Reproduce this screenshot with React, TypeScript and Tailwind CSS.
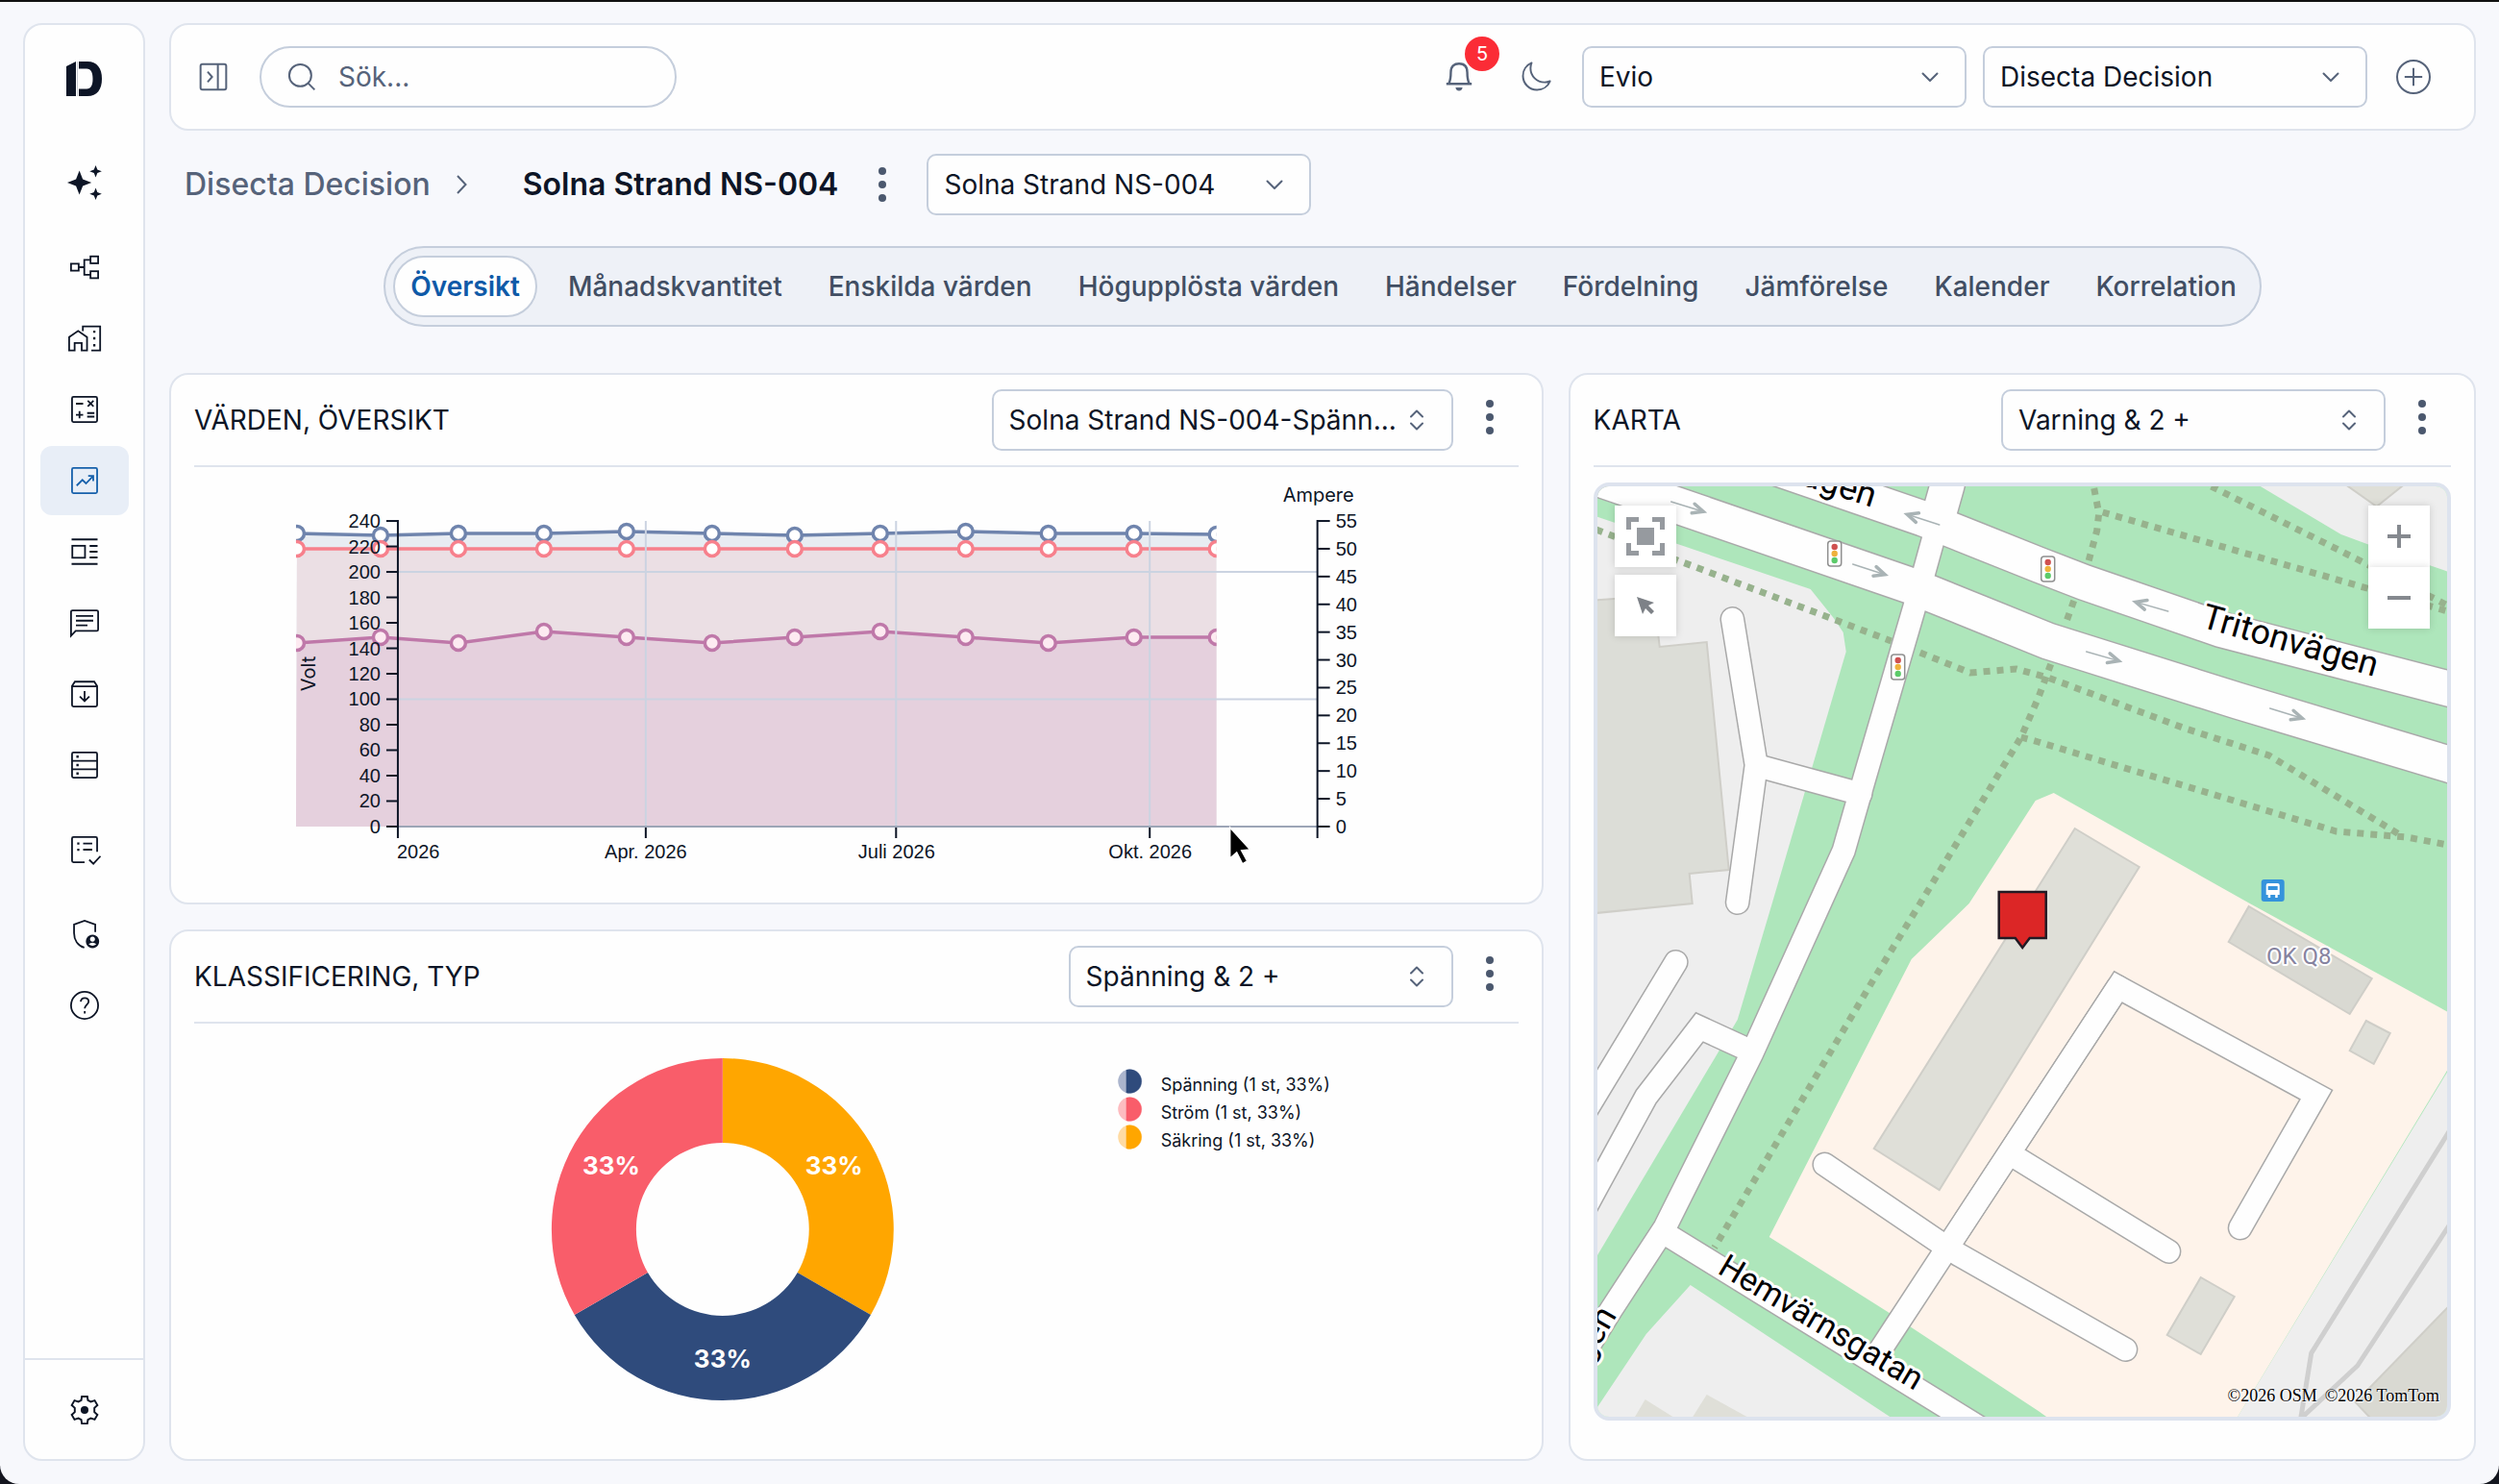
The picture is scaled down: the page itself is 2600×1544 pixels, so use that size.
import type { ReactNode } from "react";

const SANS = "font-['Inter',sans-serif]";

function Glyph({ children, className = "size-9", sw = 1.2 }: { children: ReactNode; className?: string; sw?: number }) {
  return (
    <svg viewBox="0 0 24 24" className={className} fill="none" stroke="currentColor" strokeWidth={sw} aria-hidden="true">
      {children}
    </svg>
  );
}

function NavItem({ label, active = false, children }: { label: string; active?: boolean; children: ReactNode }) {
  return (
    <button
      type="button"
      aria-label={label}
      className={
        active
          ? "flex h-[72px] w-[92px] items-center justify-center rounded-xl bg-[#e8eef7] text-[#1660ab]"
          : "flex h-[72px] w-[92px] items-center justify-center rounded-xl text-[#0d1526]"
      }
    >
      <Glyph>{children}</Glyph>
    </button>
  );
}

const star = (x: number, y: number, r: number) => {
  const k = r * 0.28;
  return `M${x} ${y - r}L${x + k} ${y - k}L${x + r} ${y}L${x + k} ${y + k}L${x} ${y + r}L${x - k} ${y + k}L${x - r} ${y}L${x - k} ${y - k}Z`;
};

function Sidebar() {
  return (
    <aside className="flex w-[127px] shrink-0 flex-col items-center rounded-[20px] border-2 border-[#dfe4ed] bg-[#fefefe]">
      <svg viewBox="0 0 37 36" className="mt-[38px] mb-[54px] h-9 w-[37px]" fill="#0d1526" role="img" aria-label="Disecta">
        <path d="M0 36V5L10 0V36Z" />
        <path d="M11.5 0V36" stroke="#b9bec8" strokeWidth="0.8" />
        <path d="M13 0H22C32 0 37 7 37 18S32 36 22 36H13V28.5H21C26 28.5 27.5 24 27.5 18S26 7.5 21 7.5H13Z" />
      </svg>
      <nav aria-label="Huvudmeny" className="flex flex-col gap-0.5">
        <div className="mb-3.5">
          <NavItem label="AI-assistent">
            <path d={star(8.4, 12, 8.4) + star(19.7, 4.2, 4.2) + star(19.7, 19.8, 4.2)} fill="currentColor" stroke="none" />
          </NavItem>
        </div>
        <NavItem label="Struktur">
          <rect x="2.6" y="9.6" width="5.3" height="4.8" />
          <rect x="16.1" y="4.5" width="5.3" height="4.8" />
          <rect x="16.1" y="14.8" width="5.3" height="4.8" />
          <path d="M8 12h3.8M16 6.9h-4.2v10.4H16" />
        </NavItem>
        <NavItem label="Fastigheter">
          <path d="M1.3 20.4V11.2L7.5 6.9L13.7 11.2V20.4H10V15.2H5.1V20.4ZM10.8 7V3.7H22.8V20.4H16.7" />
          <path d="M18 7.4h1.5M18 12h1.5M18 16.8h1.5" strokeWidth="1.6" />
        </NavItem>
        <NavItem label="Beräkningar">
          <rect x="3.3" y="3.3" width="17.4" height="17.4" rx="1" />
          <path d="M6 8h5M14.2 5.9l4 4M18.2 5.9l-4 4M6 15.8h5M8.5 13.2v5M13.8 14.5h5M13.8 17h5" />
        </NavItem>
        <NavItem label="Analys" active>
          <rect x="3.3" y="3.3" width="17.4" height="17.4" rx="1" />
          <path d="M6.5 15.5L10.5 11.5L13 14L18 8.8M14.5 8.8H18V12.3" />
        </NavItem>
        <NavItem label="Artiklar">
          <path d="M3 3.5h18M3 20.5h18M15.5 8H21M15.5 12H21M15.5 16H21" />
          <rect x="3.5" y="7.9" width="8.8" height="8.3" />
        </NavItem>
        <NavItem label="Meddelanden">
          <path d="M2.6 21V4.4Q2.6 3.4 3.6 3.4H20.4Q21.4 3.4 21.4 4.4V16.6Q21.4 17.6 20.4 17.6H5.8ZM6 7.3H18M6 10.5H18M6 13.8H14" />
        </NavItem>
        <NavItem label="Arkiv">
          <path d="M3.3 6.5L5.3 3.5H18.7L20.7 6.5V19.7Q20.7 20.7 19.7 20.7H4.3Q3.3 20.7 3.3 19.7ZM3.3 6.7H20.7M12 10V17M8.7 13.8L12 17L15.3 13.8" />
        </NavItem>
        <NavItem label="Databas">
          <rect x="3.3" y="3.3" width="17.4" height="17.4" rx="1" />
          <path d="M3.3 9.1H20.7M3.3 14.9H20.7" />
          <path d="M6.3 6.2h1.6M6.3 12h1.6M6.3 17.8h1.6" strokeWidth="1.6" />
        </NavItem>
        <div className="my-3.5">
          <NavItem label="Uppgifter">
            <path d="M12 20.7H4.3Q3.3 20.7 3.3 19.7V4.3Q3.3 3.3 4.3 3.3H19.7Q20.7 3.3 20.7 4.3V13.5M11 7.7H17.3M11 12H17.3M15.2 19L18.1 21.8L23 16.5" />
            <path d="M6.9 7.7h1.5M6.9 12h1.5" strokeWidth="1.5" />
          </NavItem>
        </div>
        <NavItem label="Behörighet">
          <path d="M11.8 21.3C7.2 19.8 4.7 15.8 4.7 11.2V5.3L12 2.6L19.4 5.3V10.5" />
          <path fillRule="evenodd" d="M17.5 12.4a4.6 4.6 0 1 0 .01 0ZM17.5 13.7a1.7 1.7 0 1 1-.01 0ZM14.8 18.9Q17.5 16.9 20.2 18.9Q17.5 21 14.8 18.9Z" fill="currentColor" stroke="none" />
        </NavItem>
        <NavItem label="Hjälp">
          <circle cx="12" cy="12" r="9.4" />
          <path d="M9.3 9.4C9.6 7.7 10.7 6.9 12.1 6.9C13.7 6.9 14.8 7.9 14.8 9.3C14.8 11.5 12.1 11.7 12.1 14.2M12.1 16V17.6" />
        </NavItem>
      </nav>
      <div className="mt-auto flex h-[105px] w-full items-center justify-center border-t-2 border-[#dfe4ed] text-[#0d1526]">
        <button type="button" aria-label="Inställningar" className="flex size-9">
          <Glyph sw={1.3}>
            <path d="M10.1 2.6H13.9L14.3 5.2L16.3 6.3L19 5.4L20.9 8.7L18.8 10.6V13.4L20.9 15.3L19 18.6L16.3 17.7L14.3 18.8L13.9 21.4H10.1L9.7 18.8L7.7 17.7L5 18.6L3.1 15.3L5.2 13.4V10.6L3.1 8.7L5 5.4L7.7 6.3L9.7 5.2Z" />
            <circle cx="12" cy="12" r="2.7" fill="currentColor" stroke="none" />
          </Glyph>
        </button>
      </div>
    </aside>
  );
}

function Select({ label, value, className, multi = false }: { label: string; value: string; className: string; multi?: boolean }) {
  return (
    <div className={`relative ${className}`}>
      <select
        aria-label={label}
        defaultValue={value}
        className="h-16 w-full appearance-none rounded-[10px] border-2 border-[#c5cedc] bg-[#fefefe] pr-12 pl-4 text-[28px] leading-8 text-[#0d1526]"
      >
        <option>{value}</option>
      </select>
      <svg
        viewBox="0 0 24 24"
        className="pointer-events-none absolute top-5 right-[26px] size-6 text-[#56637a]"
        fill="none"
        stroke="currentColor"
        strokeWidth="2"
        strokeLinecap="round"
        strokeLinejoin="round"
        aria-hidden="true"
      >
        {multi ? <path d="M6 8.5L12 2.5L18 8.5M6 15.5L12 21.5L18 15.5" /> : <path d="M4.5 8.5L12 16L19.5 8.5" />}
      </svg>
    </div>
  );
}

function Dots({ label }: { label: string }) {
  return (
    <button type="button" aria-label={label} className="flex h-14 w-10 flex-col items-center justify-center gap-1.5 text-[#4b586e]">
      <span className="size-2 rounded-full bg-current" />
      <span className="size-2 rounded-full bg-current" />
      <span className="size-2 rounded-full bg-current" />
    </button>
  );
}

function Header() {
  return (
    <header className="flex h-28 items-center rounded-[20px] border-2 border-[#dfe4ed] bg-[#fefefe] pr-[43px] pl-7 text-[#56637a]">
      <button type="button" aria-label="Visa meny" className="mr-8 flex size-8">
        <Glyph className="size-8" sw={1.5}>
          <rect x="2" y="2" width="20" height="20" rx="1.5" />
          <path d="M15.5 2V22M7.5 8L11 12L7.5 16" />
        </Glyph>
      </button>
      <div className="relative w-[434px]">
        <Glyph className="absolute top-4 left-7 size-8" sw={1.5}>
          <circle cx="10.8" cy="10.8" r="8.6" />
          <path d="M17 17L22 22" />
        </Glyph>
        <input type="search" aria-label="Sök" placeholder="Sök..." className="h-16 w-full rounded-full border-2 border-[#c5cedc] bg-[#fefefe] pr-6 pl-20 text-[28px] leading-8 placeholder:text-[#56637a]" />
      </div>
      <button type="button" aria-label="5 aviseringar" className="relative mr-11 ml-auto flex size-9">
        <Glyph className="size-9" sw={1.6}>
          <path d="M3.2 16.8H20.8M5 16.5C5.9 14.5 6.3 12.5 6.3 8.8C6.3 4.5 8.6 2.8 12 2.8S17.7 4.500 17.7 8.8C17.700 12.5 18.100 14.5 19 16.5" />
          <path d="M9.600 19.300H14.400C14.200 21 13.200 21.600 12 21.600S9.800 21 9.600 19.300Z" fill="currentColor" stroke="none" />
        </Glyph>
        <span className="absolute -top-6 left-6 flex size-9 items-center justify-center rounded-full bg-[#fb2c36] text-xl leading-6 text-white">5</span>
      </button>
      <button type="button" aria-label="Mörkt läge" className="mr-[30px] flex size-9">
        <Glyph className="size-9" sw={1.3}>
          <path strokeLinejoin="round" d="M21.752 15.002A9.718 9.718 0 0118 15.75c-5.385 0-9.75-4.365-9.75-9.75 0-1.33.266-2.597.748-3.752A9.753 9.753 0 003 11.25C3 16.635 7.365 21 12.75 21a9.753 9.753 0 009.002-5.998z" />
        </Glyph>
      </button>
      <Select label="Organisation" value="Evio" className="mr-[17px] w-[400px]" />
      <Select label="Projekt" value="Disecta Decision" className="mr-7 w-[400px]" />
      <button type="button" aria-label="Lägg till" className="flex size-10">
        <Glyph className="size-10" sw={1.2}>
          <circle cx="12" cy="12" r="10.2" />
          <path d="M12 6.5V17.5M6.5 12H17.5" />
        </Glyph>
      </button>
    </header>
  );
}

const tabs = ["Översikt", "Månadskvantitet", "Enskilda värden", "Högupplösta värden", "Händelser", "Fördelning", "Jämförelse", "Kalender", "Korrelation"];

function Tabs() {
  return (
    <div role="tablist" className="mt-8 flex h-[84px] items-center gap-3 self-center rounded-full border-2 border-[#c5cedc] bg-[#eef1f7] pr-1.5 pl-2 text-[28px] leading-8 font-medium text-[#414e63]">
      {tabs.map((t, i) => (
        <button
          key={t}
          type="button"
          role="tab"
          aria-selected={i === 0}
          className={
            i === 0
              ? "mr-0.5 h-16 rounded-full border-2 border-[#c5cedc] bg-[#fefefe] px-4 font-semibold text-[#0f5aa8]"
              : "h-16 rounded-full border-2 border-transparent px-4"
          }
        >
          {t}
        </button>
      ))}
    </div>
  );
}

function Card({ title, className, select, children }: { title: string; className: string; select: ReactNode; children: ReactNode }) {
  return (
    <section className={`flex flex-col rounded-[20px] border-2 border-[#dfe4ed] bg-[#fefefe] px-6 ${className}`}>
      <div className="flex items-center border-b-2 border-[#dfe4ed] py-[15px]">
        <h2 className="mr-auto text-[28px] leading-8 text-[#0d1526]">{title}</h2>
        {select}
        <div className="mr-2.5 ml-[18px] pb-1.5">
          <Dots label={`Fler val för ${title}`} />
        </div>
      </div>
      {children}
    </section>
  );
}

const xs = [309, 396, 477, 566, 652, 741, 827, 916, 1005, 1091, 1180, 1266];
const voltage = [555, 557, 555, 555, 553, 555, 557, 555, 553, 555, 555, 556];
const fuse = xs.map(() => 571);
const current = [669, 663, 669, 657, 663, 669, 663, 657, 663, 669, 663, 663];
const series = [
  { ys: voltage, stroke: "#6f84ad", area: "#e8ecf2", dot: "#fff" },
  { ys: fuse, stroke: "#f7808c", area: "#ebdfe4", dot: "#fff" },
  { ys: current, stroke: "#bf78a9", area: "#e5d0dd", dot: "#fdeaf1" },
];
const line = (ys: number[]) => ys.map((y, i) => `${xs[i]},${y}`).join(" ");

function ValueChart() {
  return (
    <svg viewBox="202 486 1378 453" className="min-h-0 w-full flex-1" role="img" aria-label="Värden, översikt">
      <clipPath id="plot">
        <rect x="308" y="530" width="958" height="330" />
      </clipPath>
      <g clipPath="url(#plot)">
        {series.map((s) => (
          <g key={s.stroke}>
            <polygon points={`308,860 ${line(s.ys)} 1266,860`} fill={s.area} />
            <polyline points={line(s.ys)} fill="none" stroke={s.stroke} strokeWidth="3.5" />
          </g>
        ))}
        {series.map((s) => s.ys.map((y, i) => <circle key={s.stroke + i} cx={xs[i]} cy={y} r="7.5" fill={s.dot} stroke={s.stroke} strokeWidth="3.5" />))}
      </g>
      <path d="M414 595H1371M414 727.5H1371M672 542V860M932.5 542V860M1196.5 542V860" stroke="#cbd3e1" strokeWidth="2" />
      <path d="M414 860H1371" stroke="#9ca5b6" strokeWidth="2" />
      <path d="M414 541V872M1371 541V872M672 861V872M932.5 861V872M1196.5 861V872" stroke="#0d1526" strokeWidth="2" />
      <g className="font-['Liberation_Sans',sans-serif]" fontSize="20" fill="#0d1526">
        {Array.from({ length: 13 }, (_, i) => {
          const y = 860 - i * 26.5;
          return (
            <g key={i}>
              <path d={`M402 ${y}H414`} stroke="#0d1526" strokeWidth="2" />
              <text x="396" y={y + 7} textAnchor="end">{i * 20}</text>
            </g>
          );
        })}
        {Array.from({ length: 12 }, (_, i) => {
          const y = 860 - (i * 318) / 11;
          return (
            <g key={i}>
              <path d={`M1371 ${y}H1384`} stroke="#0d1526" strokeWidth="2" />
              <text x="1390" y={y + 7}>{i * 5}</text>
            </g>
          );
        })}
        <text x="413" y="893">2026</text>
        <text x="672" y="893" textAnchor="middle">Apr. 2026</text>
        <text x="933" y="893" textAnchor="middle">Juli 2026</text>
        <text x="1197" y="893" textAnchor="middle">Okt. 2026</text>
      </g>
      <g fontSize="20" fill="#0d1526" textAnchor="middle">
        <text x="1372" y="522">Ampere</text>
        <text transform="translate(328 701) rotate(-90)">Volt</text>
      </g>
      <path d="M1280 861V893L1287 887L1293 899L1298 896L1292 885L1301 884Z" fill="#000" stroke="#fff" strokeWidth="1.5" />
    </svg>
  );
}

const legend = [
  { label: "Spänning (1 st, 33%)", fill: "#2f4b7c", light: "#abb5cd", y: 1125 },
  { label: "Ström (1 st, 33%)", fill: "#f95d6a", light: "#fdbcc0", y: 1154 },
  { label: "Säkring (1 st, 33%)", fill: "#ffa600", light: "#ffdba3", y: 1183 },
];

function TypeChart() {
  return (
    <svg viewBox="202 1065 1378 453" className="min-h-0 w-full flex-1" role="img" aria-label="Klassificering, typ">
      <g transform="translate(752 1279)">
        <path d="M0-178A178 178 0 0 1 154.15 89L77.9 45A90 90 0 0 0 0-90Z" fill="#ffa600" />
        <path d="M154.15 89A178 178 0 0 1-154.15 89L-77.9 45A90 90 0 0 0 77.9 45Z" fill="#2f4b7c" />
        <path d="M-154.15 89A178 178 0 0 1 0-178V-90A90 90 0 0 0-77.9 45Z" fill="#f95d6a" />
        <g fill="#fff" fontSize="26" fontWeight="700" textAnchor="middle">
          <text x="116" y="-57">33%</text>
          <text x="-116" y="-57">33%</text>
          <text x="0" y="144">33%</text>
        </g>
      </g>
      {legend.map((l) => (
        <g key={l.label}>
          <circle cx="1176" cy={l.y} r="12.5" fill={l.light} />
          <path d={`M1172 ${l.y - 12}A12.5 12.5 0 1 1 1172 ${l.y + 12}Z`} fill={l.fill} />
          <text x="1208" y={l.y + 10} fontSize="18" fill="#0d1526">{l.label}</text>
        </g>
      ))}
    </svg>
  );
}

const laneLower = "M1640 490L1989 610L2130 667L2327 729L2560 799";
const laneUpper = "M1830 481L2000 539.5L2120 587.5L2168 606L2310 655L2560 720";
const streets = [
  "M2020 527L1991 632L1939 810L1917.5 885L1822 1096L1731.5 1277L1676 1362L1630 1436",
  "M1731 1283L2060 1486",
  "M1801.7 644L1826.5 796L1807 939",
  "M1827 796.5L1935 826",
  "M1743 1001L1640 1171",
  "M1822 1094L1767.5 1069L1712 1141L1660 1236L1640 1273",
  "M2203 1027L1950 1413",
  "M2101 1207L2255.7 1302",
  "M1897.7 1211.5L2014.7 1291L2036.5 1305L2210.7 1404",
  "M2020 1306L2203 1027L2409 1139L2330 1277.5",
];
const paths = [
  "M1660 551L1750 585L1967 667",
  "M1997 679L2049 700L2097 696L2130 705L2273 758L2360 786L2497 869",
  "M2178 508L2183 534L2181 552L2172 585M2157 625L2148 650M2133 691L2120 726L2102 767L1997 940L1948 1020L1783 1298",
  "M2102 767L2120 772L2430 865L2503 871L2546 879",
  "M2187 533L2462 612L2546 636",
  "M2300 506L2462 587L2546 630",
];
const arrows = [
  [1738, 522, 17],
  [1927, 587, 18],
  [2017, 546, 198],
  [2255, 636, 196],
  [2170, 678, 16],
  [2361, 737, 17],
];
const lights = [
  [1908, 576],
  [1974, 694],
  [2130, 592],
];

function MapDrawing() {
  return (
    <svg viewBox="1661 506 885 968" preserveAspectRatio="xMidYMid slice" className="absolute inset-0 size-full" role="img" aria-label="Karta över Solna Strand">
      <rect x="1600" y="450" width="1000" height="1100" fill="#aee6bb" />
      <g fill="#eeeeee">
        <polygon points="1650,534 1883,613 1907,643 1917,658 1920,678 1843,940 1807,1061 1650,1325" />
        <polygon points="1650,1480 1660,1466 1712,1388 1758,1337 1970,1477" />
        <polygon points="2346,503 2435,556 2462,566 2550,596 2550,503" />
        <polygon points="2325,1478 2550,1108 2550,1478" />
      </g>
      <polygon points="2136,825 2117,833 2048,940 1988,998 1840,1287 1965,1366 2120,1468 2134,1478 2325,1478 2550,1106 2550,1055 2340,940" fill="#fef3ea" />
      <g fill="#dfdfd8" stroke="#cfcec8" strokeWidth="2">
        <polygon points="1650,625 1720,620 1726,673 1775,668 1798,905 1757,909 1760,940 1650,951" fill="#dcddd7" />
        <polygon points="2158,862 2225,902 2017,1238 1949,1195" />
        <polygon points="2339,943 2467,1018 2444,1055 2318,980" fill="#d9d9d2" />
        <polygon points="2461,1062 2486,1075 2469,1107 2444,1093" />
        <polygon points="2289,1329 2324,1349 2289,1409 2254,1389" />
        <polygon points="2438,503 2472,527 2502,503" />
        <polygon points="2550,1356 2450,1459 2468,1478 2550,1478" fill="#d9d9d2" />
        <polygon points="1698,1478 1711,1456 1746,1478" stroke="none" />
        <polygon points="1758,1478 1775,1451 1824,1478" stroke="none" />
      </g>
      <path d="M2550 1173L2404 1408L2393 1476M2550 1271L2452 1421L2393 1476" fill="none" stroke="#cfcfcf" strokeWidth="5" />
      <g fill="none" stroke="#97b28d" strokeWidth="7" strokeDasharray="7 7">
        {paths.map((d) => (
          <path key={d} d={d} />
        ))}
      </g>
      {[
        { color: "#a9a9a9", extra: 3 },
        { color: "#fefefe", extra: 0 },
      ].map(({ color, extra }) => (
        <g key={color} fill="none" stroke={color} strokeLinecap="round" strokeLinejoin="miter">
          <path d="M2031 480L2025 506L2012 552" strokeWidth={35 + extra} strokeLinecap="butt" />
          <path d={laneLower} strokeWidth={37 + extra} />
          <path d={laneUpper} strokeWidth={36 + extra} />
          {streets.map((d) => (
            <path key={d} d={d} strokeWidth={23 + extra} />
          ))}
        </g>
      ))}
      {arrows.map(([x, y, a]) => (
        <g key={`${x}-${y}`} transform={`translate(${x} ${y}) rotate(${a})`} fill="none" stroke="#a9b3b5" strokeLinecap="round">
          <path d="M0 0H34" strokeWidth="1.5" />
          <path d="M24 -5L35 0L24 5" strokeWidth="3.5" />
        </g>
      ))}
      {lights.map(([x, y]) => (
        <g key={`${x}-${y}`}>
          <rect x={x - 7} y={y - 13} width="14" height="26" rx="3" fill="#fff" stroke="#8f8f8f" strokeWidth="1.5" />
          <circle cx={x} cy={y - 7} r="3.2" fill="#cf5050" />
          <circle cx={x} cy={y} r="3.2" fill="#efb23c" />
          <circle cx={x} cy={y + 7} r="3.2" fill="#5ccb6a" />
        </g>
      ))}
      <g className="font-['Roboto',sans-serif]" fontSize="34" fill="#000" stroke="#fff" strokeWidth="6" strokeLinejoin="round" paintOrder="stroke">
        <text transform="translate(2288 652) rotate(16)" fontSize="36">Tritonvägen</text>
        <text transform="translate(1947 528) rotate(18)" fontSize="36" textAnchor="end">vägen</text>
        <text transform="translate(1785 1324) rotate(30.8)">Hemvärnsgatan</text>
        <text transform="translate(1682 1368) rotate(-60)" fontSize="36" textAnchor="end">gen</text>
        <text x="2391" y="1003" fontSize="24" fill="#86839f" strokeWidth="4" textAnchor="middle">OK Q8</text>
      </g>
      <rect x="2352" y="915" width="24" height="23" rx="3" fill="#3593dc" />
      <path d="M2357 931V921Q2357 919 2359 919H2369Q2371 919 2371 921V931H2369V934H2366.5V931H2361.5V934H2359V931ZM2359 922V926H2369V922Z" fill="#fff" fillRule="evenodd" />
      <path d="M2079 928H2128V976H2111L2103.5 986L2096 976H2079Z" fill="#dc2626" stroke="#221a24" strokeWidth="2.5" />
    </svg>
  );
}

const mapButton = "flex size-16 items-center justify-center bg-white text-[#85898f] shadow-[0_0_8px_rgba(0,0,0,0.15)]";

function MapPanel() {
  return (
    <div className="relative mt-4 mb-10 flex flex-1 items-start justify-between overflow-hidden rounded-2xl border-4 border-[#dde3ee] px-[18px] py-5">
      <MapDrawing />
      <div className="relative flex flex-col gap-2">
        <button type="button" aria-label="Visa allt" className={mapButton}>
          <svg viewBox="0 0 40 40" className="size-10" fill="#969a9f" aria-hidden="true">
            <path d="M0 0H13V5H5V13H0ZM27 0H40V13H35V5H27ZM0 27H5V35H13V40H0ZM35 27H40V40H27V35H35ZM11 11H29V29H11Z" />
          </svg>
        </button>
        <button type="button" aria-label="Markera" className={mapButton}>
          <svg viewBox="0 0 18 18" className="size-[18px]" fill="#7d8187" aria-hidden="true">
            <path d="M0 0L18 6L12 9L18 15L15 18L9 12L6 18Z" />
          </svg>
        </button>
      </div>
      <div className="relative flex flex-col">
        {["M0 12H24M12 0V24", "M0 12H24"].map((d, i) => (
          <button key={d} type="button" aria-label={i === 0 ? "Zooma in" : "Zooma ut"} className={mapButton}>
            <svg viewBox="0 0 24 24" className="size-6" stroke="currentColor" strokeWidth="4" aria-hidden="true">
              <path d={d} />
            </svg>
          </button>
        ))}
      </div>
      <div className="absolute right-2 bottom-2.5 flex gap-2 font-['Liberation_Serif',serif] text-lg leading-6 text-black [text-shadow:0_0_2px_#fff,1px_1px_1px_#fff]">
        <a href="#osm">©2026 OSM</a>
        <a href="#tomtom">©2026 TomTom</a>
      </div>
    </div>
  );
}

export default function App() {
  return (
    <div className={`bg-[#14161f] ${SANS}`}>
      <div className="flex min-h-screen gap-[25px] rounded-b-[20px] border-t-2 border-[#111] bg-[#f7f8fc] px-6 pt-[22px] pb-6">
        <Sidebar />
        <main className="flex min-w-0 flex-1 flex-col">
          <Header />
          <div className="mt-6 flex h-16 items-center pl-4 text-[32px] leading-10 text-[#56637a]">
            <a href="#decision" className="font-medium">Disecta Decision</a>
            <Glyph className="mx-5 size-6" sw={2}>
              <path d="M8 3L16.5 12L8 21" />
            </Glyph>
            <h1 className="ml-8 font-semibold text-[#0d1526]">Solna Strand NS-004</h1>
            <div className="mx-[26px]">
              <Dots label="Fler val" />
            </div>
            <Select label="Mätpunkt" value="Solna Strand NS-004" className="w-[400px]" />
          </div>
          <Tabs />
          <div className="mt-12 grid flex-1 grid-cols-5 grid-rows-2 gap-[26px]">
            <Card title="VÄRDEN, ÖVERSIKT" className="col-span-3" select={<Select multi label="Mätserier" value="Solna Strand NS-004-Spänn..." className="w-[480px]" />}>
              <ValueChart />
            </Card>
            <Card title="KARTA" className="col-span-2 row-span-2" select={<Select multi label="Kartlager" value="Varning & 2 +" className="w-[400px]" />}>
              <MapPanel />
            </Card>
            <Card title="KLASSIFICERING, TYP" className="col-span-3" select={<Select multi label="Typer" value="Spänning & 2 +" className="w-[400px]" />}>
              <TypeChart />
            </Card>
          </div>
        </main>
      </div>
    </div>
  );
}
